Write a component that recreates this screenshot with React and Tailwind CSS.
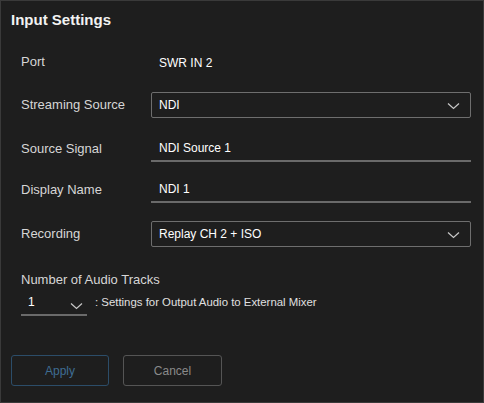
const Chevron = ({ className = "" }) => (
  <svg width="13" height="8" viewBox="0 0 13 8" className={className}>
    <polyline points="1,1.5 6.5,6.5 12,1.5" fill="none" stroke="#c8c8c8" strokeWidth="1.2" />
  </svg>
);

const Row = ({ label, className = "", children }) => (
  <div className={`flex items-center h-[26px] ${className}`}>
    <div className="w-[130px] text-[13px] text-[#d6d6d6]">{label}</div>
    <div className="flex-1">{children}</div>
  </div>
);

const SelectBox = ({ value }) => (
  <div className="flex items-center justify-between h-[26px] border border-[#6e6e6e] rounded-[2px] pl-[7px] pr-[10px]">
    <span className="text-[12px] text-white">{value}</span>
    <Chevron className="mt-[1px]" />
  </div>
);

const LineInput = ({ value }) => (
  <div className="flex items-center h-[26px] border-b-2 border-[#6a6a6a] pl-[8px]">
    <span className="text-[12px] text-white">{value}</span>
  </div>
);

export default function App() {
  return (
    <div
      className="w-[484px] h-[403px] bg-[#1e1e1e] border border-[#3a3a3a] overflow-hidden"
      style={{ fontFamily: '"Liberation Sans", Arial, sans-serif' }}
    >
      <h1 className="mt-[9px] ml-[10px] h-[20px] leading-[20px] text-[15px] font-bold text-[#f2f2f2]">
        Input Settings
      </h1>

      <div className="pl-[20px] pr-[12px]">
        <Row label="Port" className="mt-[19px]">
          <span className="pl-[8px] text-[12px] text-white">SWR IN 2</span>
        </Row>
        <Row label="Streaming Source" className="mt-[17px]">
          <SelectBox value="NDI" />
        </Row>
        <Row label="Source Signal" className="mt-[18px]">
          <LineInput value="NDI Source 1" />
        </Row>
        <Row label="Display Name" className="mt-[15px]">
          <LineInput value="NDI 1" />
        </Row>
        <Row label="Recording" className="mt-[18px]">
          <SelectBox value="Replay CH 2 + ISO" />
        </Row>

        <div className="mt-[25px] h-[16px] leading-[16px] text-[13px] text-[#d6d6d6]">
          Number of Audio Tracks
        </div>
        <div className="mt-[2px] flex items-center h-[26px]">
          <div className="flex items-center justify-between w-[66px] h-[26px] border-b-2 border-[#6a6a6a] pl-[7px] pr-[4px]">
            <span className="text-[12px] text-white">1</span>
            <Chevron className="mt-[8px]" />
          </div>
          <span className="ml-[8px] text-[11.4px] text-[#e0e0e0]">
            : Settings for Output Audio to External Mixer
          </span>
        </div>
      </div>

      <div className="mt-[39px] ml-[10px] flex gap-[14px]">
        <button className="w-[98px] h-[31px] border border-[#2c4d69] rounded-[3px] text-[12px] text-[#3f6d93]">
          Apply
        </button>
        <button className="w-[99px] h-[31px] border border-[#555555] rounded-[3px] text-[12px] text-[#8a8a8a]">
          Cancel
        </button>
      </div>
    </div>
  );
}
